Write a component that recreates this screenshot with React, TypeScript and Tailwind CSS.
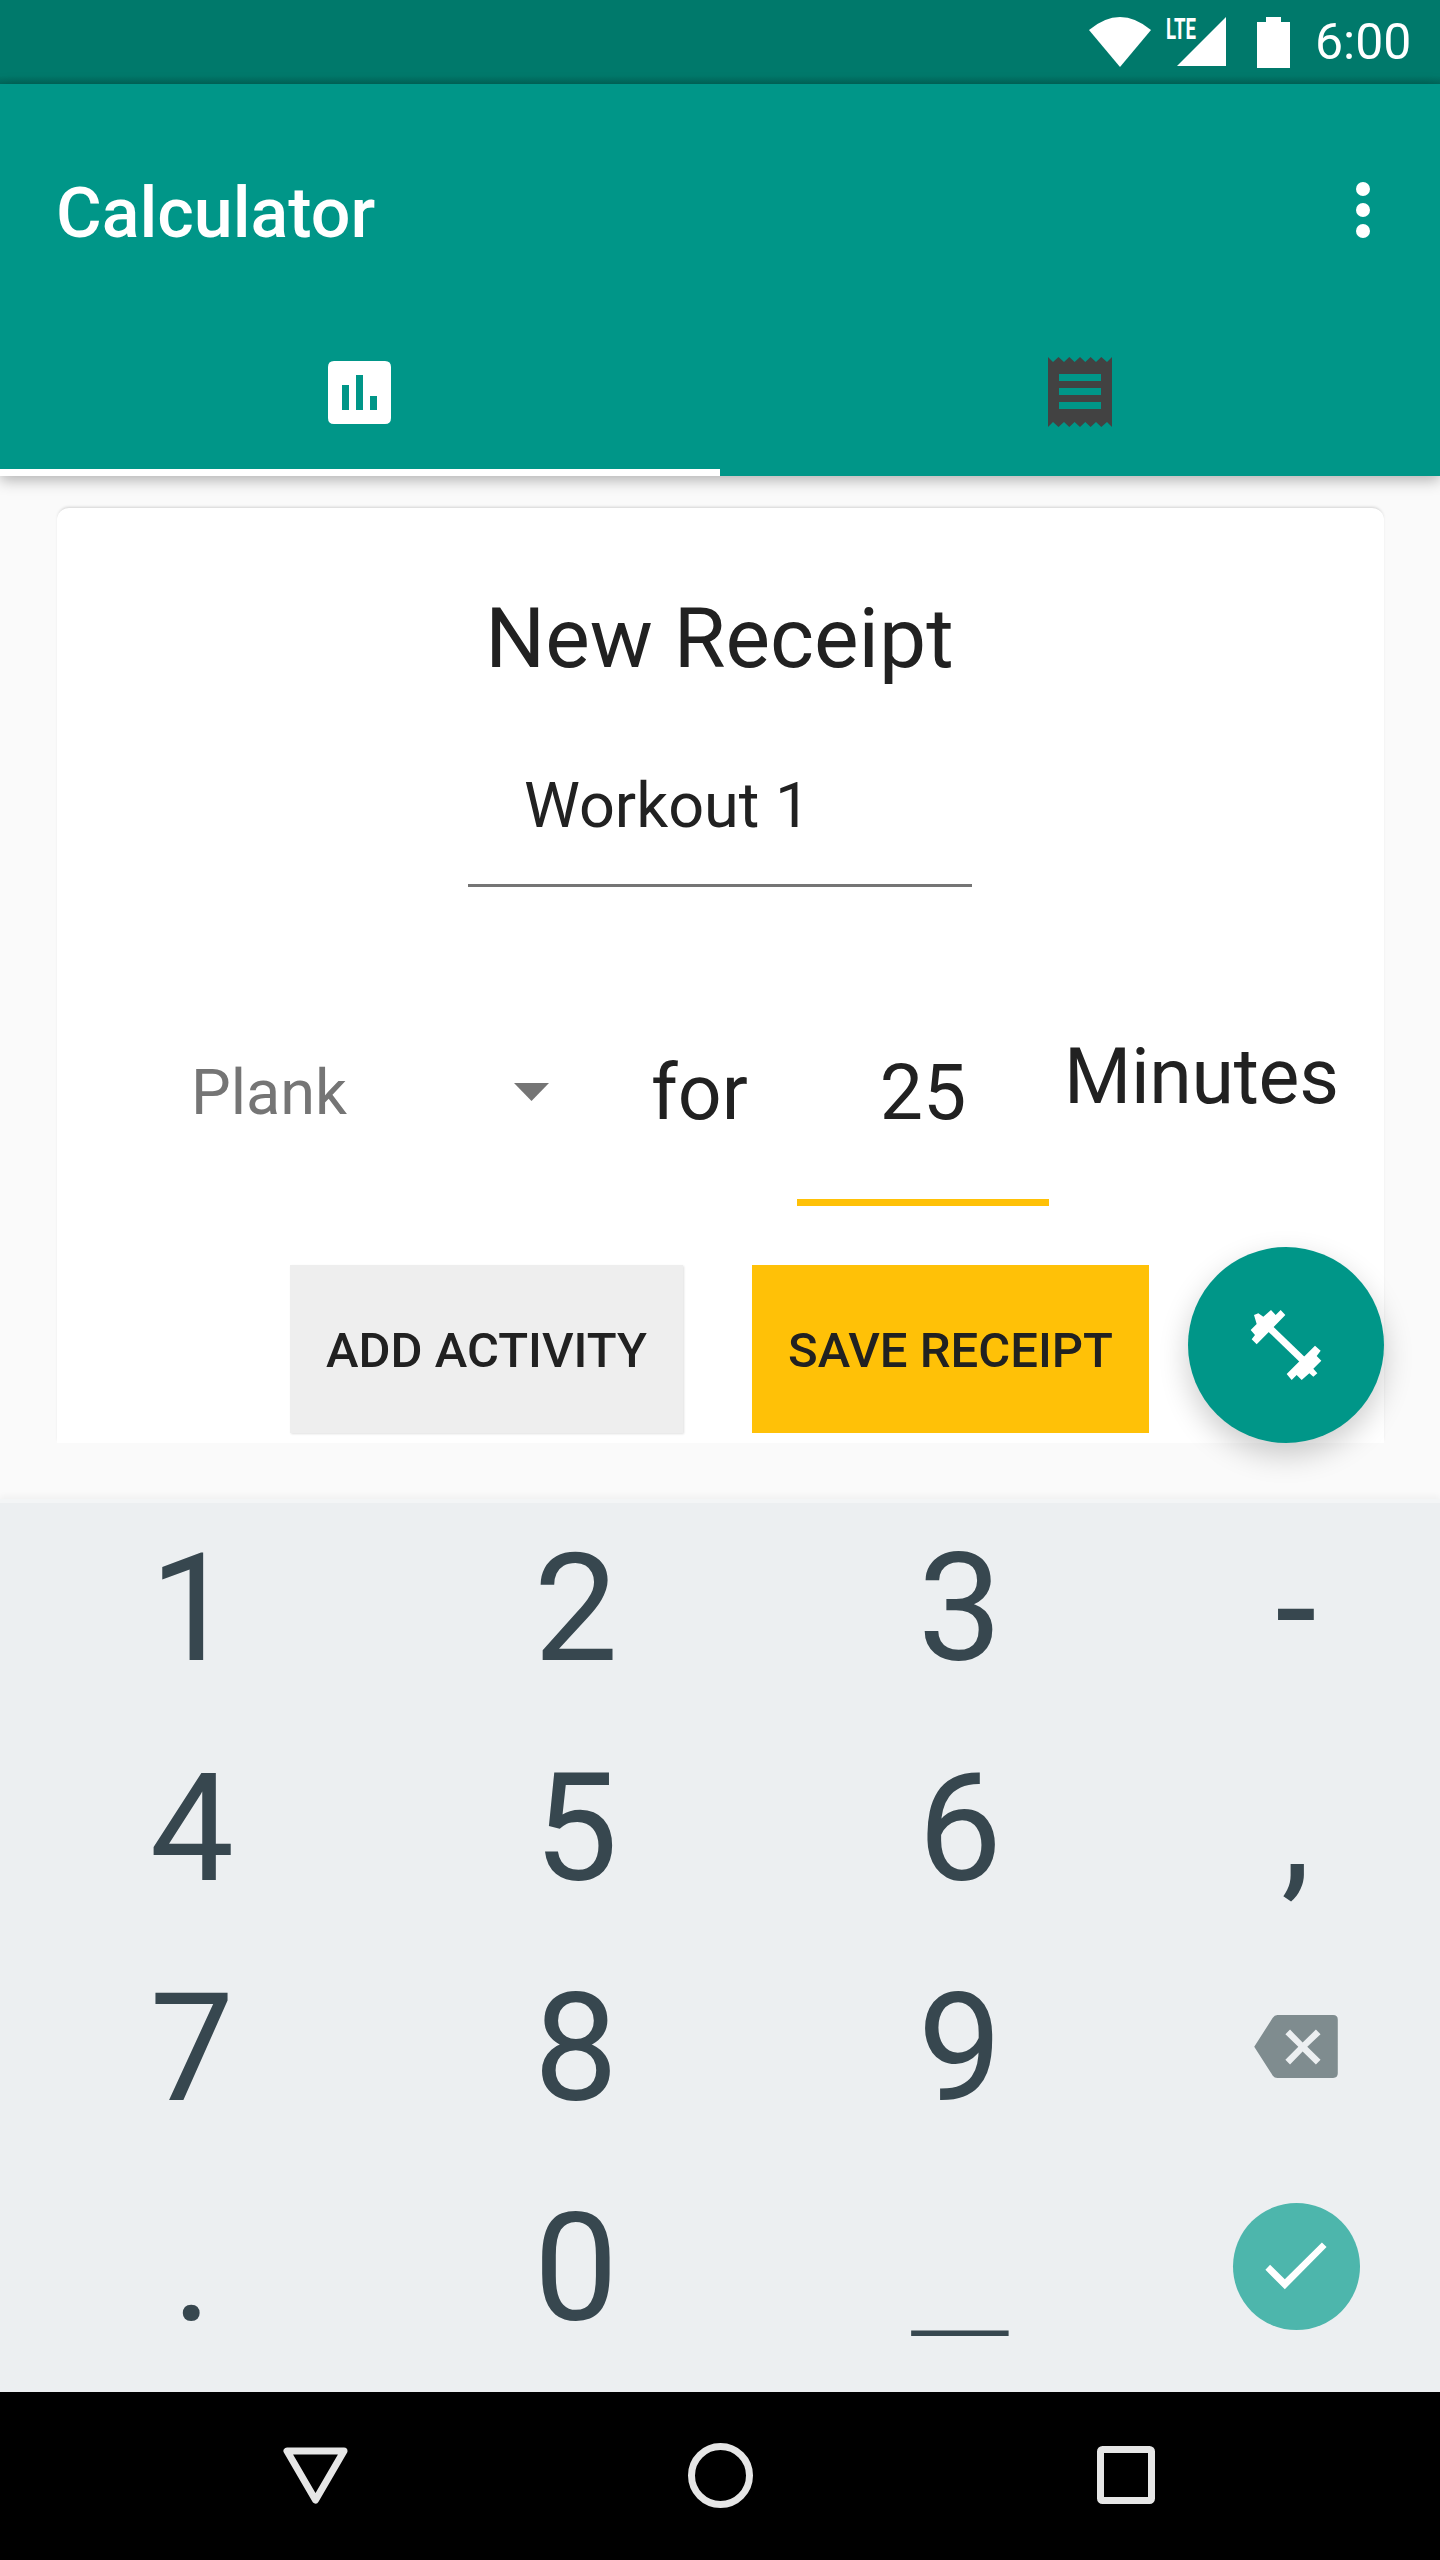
const font = { fontFamily: "Roboto, sans-serif" };

function Key({ children, className = "" }: { children?: React.ReactNode; className?: string }) {
  return <div className={`flex items-center justify-center h-[220px] text-[#37474f] ${className}`}>{children}</div>;
}

function Digit({ v }: { v: string }) {
  return <Key className="text-[150px] leading-none"><span className="translate-y-[3px]">{v}</span></Key>;
}

export default function App() {
  return (
    <div className="relative flex flex-col w-[1440px] h-[2560px] bg-[#fafafa] overflow-hidden" style={font}>
      {/* status bar */}
      <div className="h-[84px] bg-gradient-to-b from-[#00796b] from-90% to-[#00695c] flex items-center justify-end pr-[30px] text-white shrink-0">
        <svg width="62" height="50" viewBox="0 0 62 50" className="mr-[15px] mt-[-1px]">
          <path d="M0 13 Q31 -13 62 13 L31 50 Z" fill="#fff" />
        </svg>
        <div className="relative w-[61px] h-[50px] mr-[30px]">
          <svg width="50" height="50" viewBox="0 0 50 50" className="absolute right-0 top-0">
            <path d="M49 0 V49 H0 Z" fill="#fff" />
          </svg>
          <span className="absolute left-0 top-[-3px] text-[30px] font-bold leading-[30px] scale-x-[0.62] origin-left">LTE</span>
        </div>
        <svg width="33" height="51" viewBox="0 0 33 51" className="mr-[25px]">
          <path d="M9 0 H24 V5 H33 V51 H0 V5 H9 Z" fill="#fff" />
        </svg>
        <span className="text-[50px] leading-none w-[95px] whitespace-nowrap">6:00</span>
      </div>

      {/* app bar */}
      <div className="relative z-10 h-[392px] shrink-0 bg-[#009688] flex flex-col shadow-[0_4px_14px_rgba(0,0,0,0.3)]">
        <div className="h-[256px] flex items-center justify-between pl-[56px] pr-[70px]">
          <span className="text-[70px] font-medium text-white leading-none pt-[2px]">Calculator</span>
          <div className="flex flex-col gap-[7px] mb-[4px]">
            <div className="w-[14px] h-[14px] rounded-full bg-white" />
            <div className="w-[14px] h-[14px] rounded-full bg-white" />
            <div className="w-[14px] h-[14px] rounded-full bg-white" />
          </div>
        </div>
        <div className="flex-1 flex">
          <div className="w-[720px] flex items-center justify-center border-b-[7px] border-white pb-[25px] pr-[1px]">
            <svg width="63" height="63" viewBox="0 0 63 63">
              <path fillRule="evenodd" fill="#fff" d="M6 0 H57 Q63 0 63 6 V57 Q63 63 57 63 H6 Q0 63 0 57 V6 Q0 0 6 0 Z M14 24 V49 H21 V24 Z M28 14 V49 H35 V14 Z M42 35 V49 H49 V35 Z" />
            </svg>
          </div>
          <div className="w-[720px] flex items-center justify-center pb-[32px]">
            <svg width="64" height="70" viewBox="0 0 64 70">
              <path fillRule="evenodd" fill="#424242" d="M0 0 L5 5 L10.5 0 L16 5 L21.3 0 L26.6 5 L32 0 L37.3 5 L42.6 0 L48 5 L53.3 0 L59 5 L64 0 V70 L59 65 L53.3 70 L48 65 L42.6 70 L37.3 65 L32 70 L26.6 65 L21.3 70 L16 65 L10.5 70 L5 65 L0 70 Z M11 17 V24 H53 V17 Z M11 31 V38 H53 V31 Z M11 45 V52 H53 V45 Z" />
            </svg>
          </div>
        </div>
      </div>

      {/* content */}
      <div className="relative h-[1023px] shrink-0 pl-[57px] pr-[56px] pt-[32px]">
        <div className="relative h-[935px] bg-white rounded-t-[12px] shadow-[0_-2px_3px_-1px_rgba(0,0,0,0.16)] flex flex-col items-center">
          <div className="h-[166px] pt-[81px] text-[84px] text-[#212121] leading-[100px] ml-[-2px]">New Receipt</div>
          <div className="mt-[67px] w-[504px] h-[146px] border-b-[3px] border-[#757575] pl-[56px] pt-[28px] text-[63px] leading-[74px] text-[#212121] ml-[-1px]">Workout 1</div>
          <div className="mt-[162px] w-full flex items-start text-[#212121]">
            <div className="w-[481px] flex items-center pl-[134px] h-[92px] mt-[-2px] text-[63px] text-[#757575]">
              <span className="flex-1">Plank</span>
              <svg width="35" height="18" viewBox="0 0 35 18" className="mr-[-11px] mt-[-2px]"><path d="M0 0 H35 L17.5 18 Z" fill="#757575" /></svg>
            </div>
            <span className="ml-[113px] mt-[-2px] w-[146px] text-[77px] leading-[92px]">for</span>
            <div className="w-[252px] h-[159px] mt-[-2px] border-b-[7px] border-[#ffc107] text-center text-[77px] leading-[92px]">25</div>
            <span className="ml-[15px] mt-[-18px] text-[77px] leading-[92px] whitespace-nowrap tracking-[-0.3px]">Minutes</span>
          </div>
          <div className="absolute left-[233px] top-[757px] flex gap-[69px] text-[49px] font-medium text-[#212121]">
            <div className="w-[393px] h-[168px] bg-[#eeeeee] flex items-center justify-center pt-[3px] shadow-[1px_1px_2px_rgba(0,0,0,0.12)]"><span>ADD ACTIVITY</span></div>
            <div className="w-[397px] h-[168px] bg-[#ffc107] flex items-center justify-center pt-[3px]"><span>SAVE RECEIPT</span></div>
          </div>
          <div className="absolute right-0 top-[739px] w-[196px] h-[196px] rounded-full bg-[#009688] flex items-center justify-center shadow-[0_12px_30px_rgba(0,0,0,0.2)]">
            <svg width="72" height="72" viewBox="450 327 216 216">
              <g fill="#fff">
                <polygon points="505,395 520,380 615,472 600,487" />
                <polygon points="462,345 475,340 490,350 513,330 527,345 542,330 556,345 470,433 455,418 465,405 452,390 470,372" />
                <polygon points="645,437 662,452 650,468 664,482 640,506 652,520 640,530 628,520 605,540 590,525 575,540 560,522" />
              </g>
            </svg>
          </div>
        </div>
      </div>

      {/* keyboard */}
      <div className="relative h-[893px] shrink-0 bg-[#eceff1] border-t-4 border-[#f3f5f6] shadow-[0_-3px_6px_rgba(0,0,0,0.04)]">
        <div className="mt-[-7px] grid grid-cols-[384px_384px_384px_288px]">
          <Digit v="1" /><Digit v="2" /><Digit v="3" /><Digit v="-" />
          <Digit v="4" /><Digit v="5" /><Digit v="6" /><Digit v="," />
          <Digit v="7" /><Digit v="8" /><Digit v="9" />
          <Key>
            <svg width="84" height="63" viewBox="462 162 252 190">
              <path fillRule="evenodd" fill="#7f8c8f" d="M462 258 L518 170 Q523 162 532 162 H700 Q714 162 714 176 V338 Q714 352 700 352 H532 Q523 352 518 345 Z M570 206 L556 220 L595 258 L556 297 L570 311 L608 272 L648 311 L662 297 L622 258 L662 220 L648 206 L608 245 Z" />
            </svg>
          </Key>
          <Digit v="." /><Digit v="0" />
          <Key className="text-[150px] leading-none text-[#546e7a]">
            <span className="inline-block scale-x-[1.45] scale-y-[0.5] translate-y-[38px]">_</span>
          </Key>
          <Key>
            <div className="w-[127px] h-[127px] rounded-full bg-[#4db6ac]">
              <svg width="127" height="127" viewBox="400 730 380 380">
                <polygon fill="#fff" points="497,930 511,915 555,958 666,848 680,862 555,988" />
              </svg>
            </div>
          </Key>
        </div>
      </div>

      {/* nav bar */}
      <div className="flex-1 bg-black flex items-center justify-center pr-[2px]">
        <div className="flex items-center pb-[2px]">
          <svg width="65" height="57" viewBox="0 0 65 57"><path d="M4 4 H61 L32.5 53 Z" fill="none" stroke="#e6e6e6" strokeWidth="7" strokeLinejoin="round" /></svg>
          <svg width="65" height="65" viewBox="0 0 65 65" className="ml-[340px]"><circle cx="32.5" cy="32.5" r="29" fill="none" stroke="#e6e6e6" strokeWidth="7" /></svg>
          <svg width="58" height="58" viewBox="0 0 58 58" className="ml-[344px]"><rect x="3.5" y="3.5" width="51" height="51" rx="2" fill="none" stroke="#e6e6e6" strokeWidth="7" /></svg>
        </div>
      </div>
    </div>
  );
}
